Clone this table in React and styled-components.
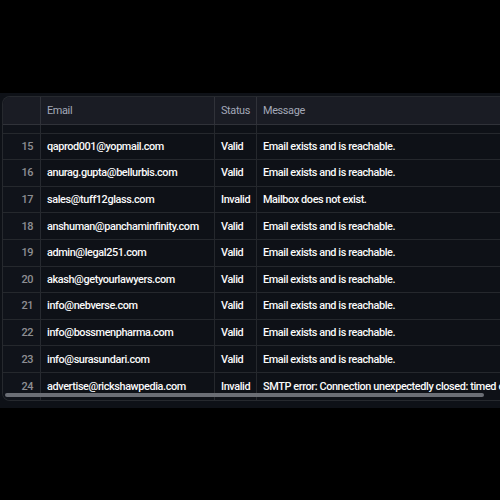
import React, { useEffect, useRef } from 'react';
import styled, { createGlobalStyle } from 'styled-components';

const GlobalStyle = createGlobalStyle`
  html, body {
    margin: 0;
    padding: 0;
    background: #000;
    width: 500px;
    height: 500px;
    overflow: hidden;
    font-family: "Roboto", "Liberation Sans", sans-serif;
  }
`;

const Panel = styled.section`
  margin-top: 93px;
  background: #0e1117;
  padding: 3px 0 7px 2px;
`;

const Grid = styled.div`
  position: relative;
  height: 303px;
  border: 1px solid rgba(250, 250, 250, 0.1);
  border-right: none;
  border-radius: 8px 0 0 8px;
  overflow: hidden;
  display: flex;
  flex-direction: column;
`;

const cols = '38px 174px 42px 1fr';

const HeaderRow = styled.div`
  display: grid;
  grid-template-columns: ${cols};
  height: 27px;
  flex-shrink: 0;
  background: #1a1c24;
  border-bottom: 1px solid rgba(250, 250, 250, 0.1);
`;

const HeaderCell = styled.div`
  display: flex;
  align-items: center;
  padding: 0 6px;
  font-size: 10.9px;
  letter-spacing: -0.35px;
  color: #a3a8b8;
  border-right: 1px solid rgba(250, 250, 250, 0.1);
  white-space: nowrap;
  &:last-child { border-right: none; }
`;

const Body = styled.div`
  flex: 1;
  overflow: hidden;
`;

const Row = styled.div`
  display: grid;
  grid-template-columns: ${cols};
  height: 26.6px;
  box-sizing: border-box;
  border-bottom: 1px solid rgba(250, 250, 250, 0.1);
  &:last-child { border-bottom: none; }
`;

const Cell = styled.div`
  display: flex;
  align-items: center;
  justify-content: ${(p) => (p.$index ? 'flex-end' : 'flex-start')};
  padding: 0 ${(p) => (p.$index ? '7px' : '6px')};
  font-size: 10.9px;
  font-weight: 500;
  letter-spacing: -0.4px;
  color: ${(p) => (p.$index ? 'rgba(250, 250, 250, 0.55)' : '#fafafa')};
  background: ${(p) => (p.$index ? '#10131a' : 'transparent')};
  border-right: 1px solid rgba(250, 250, 250, 0.1);
  white-space: nowrap;
  overflow: hidden;
  &:last-child { border-right: none; overflow: visible; }
`;

const ScrollThumb = styled.div`
  position: absolute;
  left: 2px;
  bottom: 3px;
  width: 479px;
  height: 4px;
  border-radius: 2px;
  background: #6b6e75;
`;

const rows = [
  [14, 'contact@vanyastar.com', 'Valid', 'Email exists and is reachable.'],
  [15, 'qaprod001@yopmail.com', 'Valid', 'Email exists and is reachable.'],
  [16, 'anurag.gupta@bellurbis.com', 'Valid', 'Email exists and is reachable.'],
  [17, 'sales@tuff12glass.com', 'Invalid', 'Mailbox does not exist.'],
  [18, 'anshuman@panchaminfinity.com', 'Valid', 'Email exists and is reachable.'],
  [19, 'admin@legal251.com', 'Valid', 'Email exists and is reachable.'],
  [20, 'akash@getyourlawyers.com', 'Valid', 'Email exists and is reachable.'],
  [21, 'info@nebverse.com', 'Valid', 'Email exists and is reachable.'],
  [22, 'info@bossmenpharma.com', 'Valid', 'Email exists and is reachable.'],
  [23, 'info@surasundari.com', 'Valid', 'Email exists and is reachable.'],
  [24, 'advertise@rickshawpedia.com', 'Invalid', 'SMTP error: Connection unexpectedly closed: timed out'],
];

export default function App() {
  const bodyRef = useRef(null);

  useEffect(() => {
    if (bodyRef.current) bodyRef.current.scrollTop = 17.5;
  }, []);

  return (
    <>
      <GlobalStyle />
      <Panel>
        <Grid>
          <HeaderRow>
            <HeaderCell />
            <HeaderCell>Email</HeaderCell>
            <HeaderCell>Status</HeaderCell>
            <HeaderCell>Message</HeaderCell>
          </HeaderRow>
          <Body ref={bodyRef}>
            {rows.map(([i, email, status, msg]) => (
              <Row key={i}>
                <Cell $index>{i}</Cell>
                <Cell>{email}</Cell>
                <Cell>{status}</Cell>
                <Cell>{msg}</Cell>
              </Row>
            ))}
          </Body>
          <ScrollThumb />
        </Grid>
      </Panel>
    </>
  );
}
